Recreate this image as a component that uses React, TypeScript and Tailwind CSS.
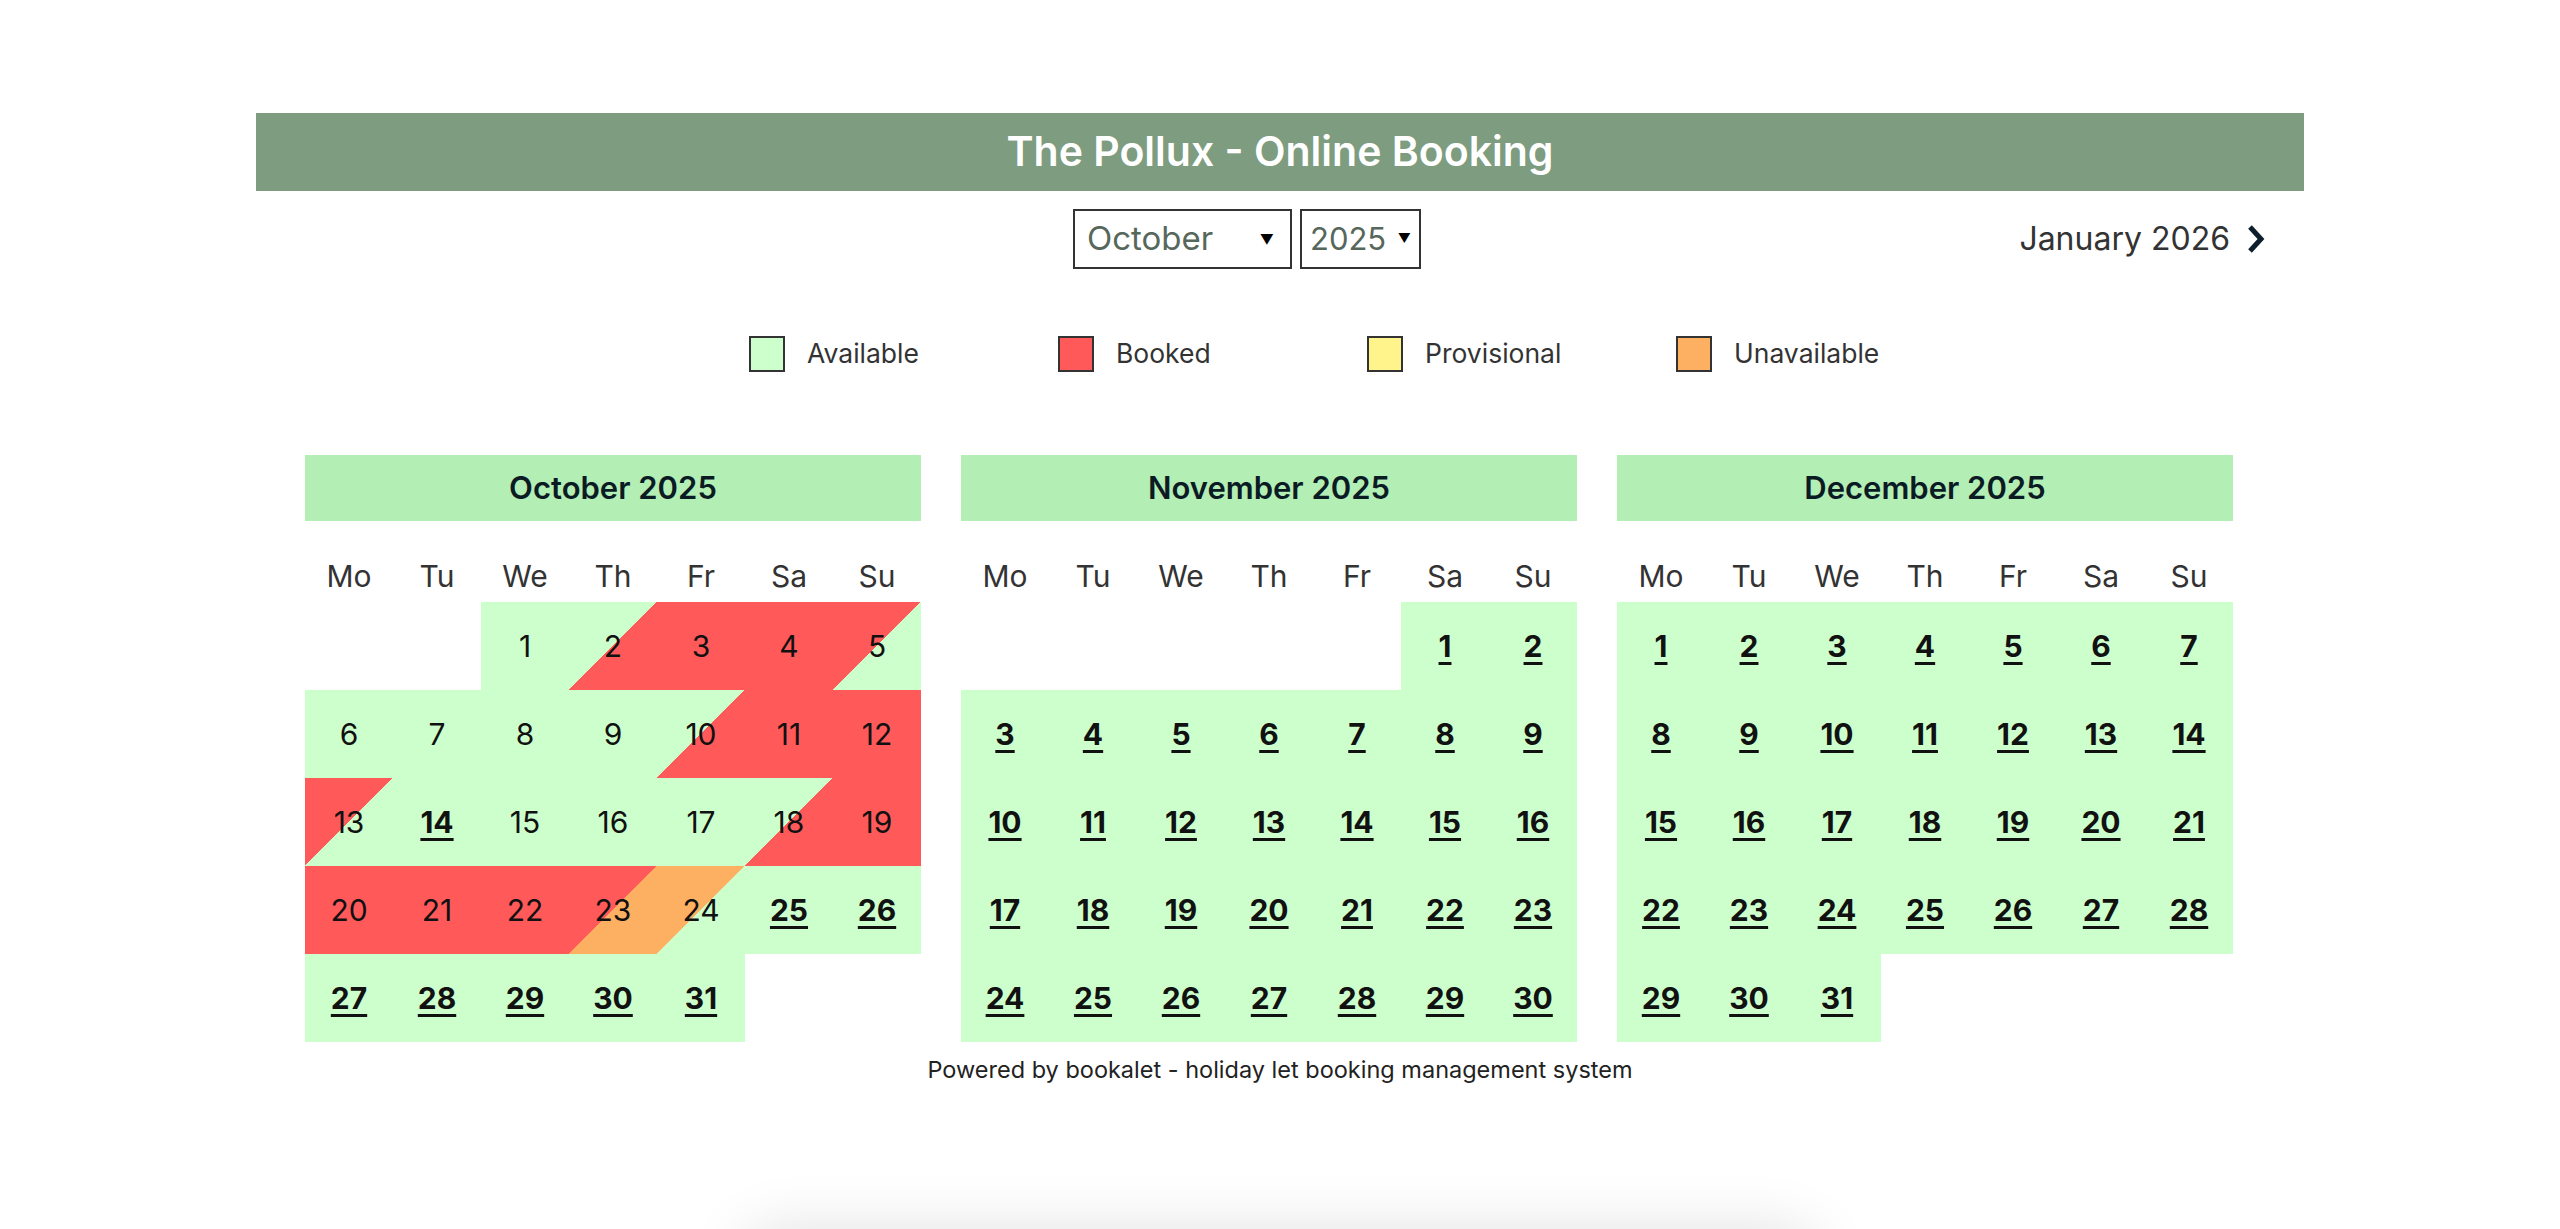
import React from "react";

type Cell = { d: number; bg: string; bold?: boolean } | null;

const G = "bg-[#ccffcc]";
const R = "bg-[#ff5959]";
const GR = "bg-[linear-gradient(to_bottom_right,#ccffcc_50%,#ff5959_50%)]";
const RG = "bg-[linear-gradient(to_bottom_right,#ff5959_50%,#ccffcc_50%)]";
const RO = "bg-[linear-gradient(to_bottom_right,#ff5959_50%,#fdb062_50%)]";
const OG = "bg-[linear-gradient(to_bottom_right,#fdb062_50%,#ccffcc_50%)]";

const october: Cell[] = [
  null,
  null,
  { d: 1, bg: G },
  { d: 2, bg: GR },
  { d: 3, bg: R },
  { d: 4, bg: R },
  { d: 5, bg: RG },
  { d: 6, bg: G },
  { d: 7, bg: G },
  { d: 8, bg: G },
  { d: 9, bg: G },
  { d: 10, bg: GR },
  { d: 11, bg: R },
  { d: 12, bg: R },
  { d: 13, bg: RG },
  { d: 14, bg: G, bold: true },
  { d: 15, bg: G },
  { d: 16, bg: G },
  { d: 17, bg: G },
  { d: 18, bg: GR },
  { d: 19, bg: R },
  { d: 20, bg: R },
  { d: 21, bg: R },
  { d: 22, bg: R },
  { d: 23, bg: RO },
  { d: 24, bg: OG },
  { d: 25, bg: G, bold: true },
  { d: 26, bg: G, bold: true },
  { d: 27, bg: G, bold: true },
  { d: 28, bg: G, bold: true },
  { d: 29, bg: G, bold: true },
  { d: 30, bg: G, bold: true },
  { d: 31, bg: G, bold: true },
];

function freeMonth(offset: number, days: number): Cell[] {
  const cells: Cell[] = [];
  for (let i = 0; i < offset; i++) cells.push(null);
  for (let d = 1; d <= days; d++) cells.push({ d, bg: G, bold: true });
  return cells;
}

const months = [
  { title: "October 2025", cells: october },
  { title: "November 2025", cells: freeMonth(5, 30) },
  { title: "December 2025", cells: freeMonth(0, 31) },
];

const dayNames = ["Mo", "Tu", "We", "Th", "Fr", "Sa", "Su"];

const legend = [
  { label: "Available", color: "bg-[#ccffcc]" },
  { label: "Booked", color: "bg-[#ff5959]" },
  { label: "Provisional", color: "bg-[#fff48c]" },
  { label: "Unavailable", color: "bg-[#fdb062]" },
];

function MonthCalendar({ title, cells }: { title: string; cells: Cell[] }) {
  return (
    <div className="w-[616px]">
      <div className="flex h-[66px] items-center justify-center bg-[#b3eeb5] text-[31px] font-semibold text-[#0b1b24]">
        {title}
      </div>
      <div className="grid h-[81px] grid-cols-7 items-end">
        {dayNames.map((n) => (
          <div key={n} className="pb-[6px] text-center text-[30px] leading-[40px] text-[#333]">
            {n}
          </div>
        ))}
      </div>
      <div className="grid grid-cols-7">
        {cells.map((c, i) =>
          c ? (
            <div
              key={i}
              className={`flex h-[88px] items-center justify-center text-[30px] text-[#111] ${c.bg}`}
            >
              <span className={c.bold ? "font-bold underline decoration-[3px] underline-offset-[5px]" : ""}>
                {c.d}
              </span>
            </div>
          ) : (
            <div key={i} className="h-[88px]" />
          )
        )}
      </div>
    </div>
  );
}

export default function App() {
  return (
    <div className="min-h-[1229px] bg-white font-['Inter',sans-serif] text-[#333]">
      <div className="mx-auto w-[2048px] pt-[113px]">
        <div className="flex h-[78px] items-center justify-center bg-[#7d9c80] text-[41px] font-semibold text-white">
          The Pollux - Online Booking
        </div>

        <div className="mt-[18px] flex h-[60px] items-center">
          <div className="ml-[817px] flex gap-[8px]">
            <div className="flex h-[60px] w-[219px] items-center justify-between border-2 border-[#333] pl-[12px] pr-[16px] text-[33px] text-[#56675b]">
              <span>October</span>
              <span className="text-[14px] text-black">▼</span>
            </div>
            <div className="flex h-[60px] w-[121px] items-center justify-between border-2 border-[#333] pl-[8px] pr-[8px] text-[31px] text-[#56675b]">
              <span>2025</span>
              <span className="text-[13px] text-black">▼</span>
            </div>
          </div>
          <div className="ml-auto mr-[38px] flex items-center gap-[16px] text-[32px] text-[#333]">
            <span>January 2026</span>
            <svg width="20" height="30" viewBox="0 0 20 30" fill="none">
              <path d="M4 3 L15 15 L4 27" stroke="#0d1f2d" strokeWidth="5" strokeLinejoin="miter" />
            </svg>
          </div>
        </div>

        <div className="mt-[67px] flex h-[36px] items-center pl-[493px]">
          {legend.map((l) => (
            <div key={l.label} className="flex w-[309px] items-center">
              <div className={`h-[36px] w-[36px] border-2 border-[#333] ${l.color}`} />
              <span className="ml-[22px] text-[26.5px] text-[#333]">{l.label}</span>
            </div>
          ))}
        </div>

        <div className="mt-[83px] flex gap-[40px] pl-[49px]">
          {months.map((m) => (
            <MonthCalendar key={m.title} title={m.title} cells={m.cells} />
          ))}
        </div>

        <div className="mt-[12px] text-center text-[23.5px] leading-[32px] text-[#222]">
          Powered by bookalet - holiday let booking management system
        </div>
      </div>

      <div className="fixed bottom-[-90px] left-[740px] h-[90px] w-[1080px] rounded-[40px] bg-white shadow-[0_0_60px_rgba(0,0,0,0.12)]" />
    </div>
  );
}
